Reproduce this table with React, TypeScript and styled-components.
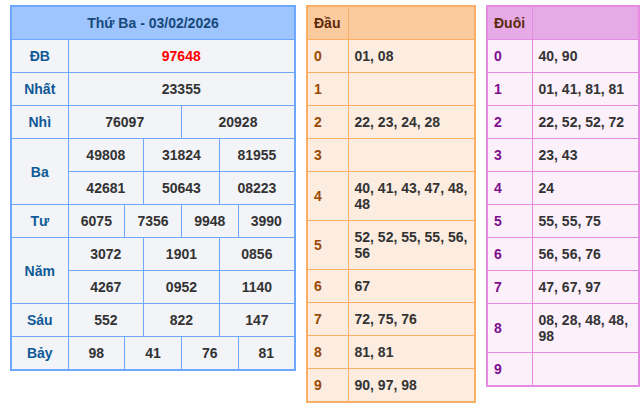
import React from 'react'
import styled, { createGlobalStyle } from 'styled-components'

const GlobalStyle = createGlobalStyle`
  body {
    margin: 0;
    background: #ffffff;
    font-family: "Liberation Sans", Arial, sans-serif;
  }
`

const Page = styled.div`
  display: flex;
  align-items: flex-start;
  gap: 10px;
  padding: 5px 0 5px 10px;
`

const Table = styled.table<{ $width: number; $border: string; $bg: string }>`
  flex-shrink: 0;
  width: ${(p) => p.$width}px;
  border-collapse: collapse;
  table-layout: fixed;
  border: 2px solid ${(p) => p.$border};
  background: ${(p) => p.$bg};
  font-size: 14px;
  font-weight: bold;
  line-height: 16px;
  color: #333333;

  td,
  th {
    border: 1px solid ${(p) => p.$border};
    padding: 8px 6px;
  }
`

const HeadCell = styled.th<{ $bg: string; $color: string; $align?: string }>`
  background: ${(p) => p.$bg};
  color: ${(p) => p.$color};
  text-align: ${(p) => p.$align || 'center'};
  font-weight: bold;
  height: 16px;
`

const PrizeLabel = styled.td`
  color: #0f5a96;
  text-align: center;
`

const PrizeValue = styled.td<{ $special?: boolean }>`
  text-align: center;
  color: ${(p) => (p.$special ? '#ff0000' : '#333333')};
`

const DigitCell = styled.td<{ $color: string }>`
  color: ${(p) => p.$color};
`

const ListCell = styled.td`
  word-wrap: break-word;
`

type Prize = { label: string; rows: string[][]; special?: boolean }

const prizes: Prize[] = [
  { label: 'ĐB', rows: [['97648']], special: true },
  { label: 'Nhất', rows: [['23355']] },
  { label: 'Nhì', rows: [['76097', '20928']] },
  { label: 'Ba', rows: [['49808', '31824', '81955'], ['42681', '50643', '08223']] },
  { label: 'Tư', rows: [['6075', '7356', '9948', '3990']] },
  { label: 'Năm', rows: [['3072', '1901', '0856'], ['4267', '0952', '1140']] },
  { label: 'Sáu', rows: [['552', '822', '147']] },
  { label: 'Bảy', rows: [['98', '41', '76', '81']] },
]

const dau = ['01, 08', '', '22, 23, 24, 28', '', '40, 41, 43, 47, 48, 48', '52, 52, 55, 55, 56, 56', '67', '72, 75, 76', '81, 81', '90, 97, 98']
const duoi = ['40, 90', '01, 41, 81, 81', '22, 52, 52, 72', '23, 43', '24', '55, 55, 75', '56, 56, 76', '47, 67, 97', '08, 28, 48, 48, 98', '']

const ResultTable: React.FC = () => (
  <Table $width={286} $border="#6ea8fe" $bg="#f3f4f8">
    <colgroup>
      <col style={{ width: 57 }} />
      {Array.from({ length: 12 }).map((_, i) => (
        <col key={i} />
      ))}
    </colgroup>
    <thead>
      <tr>
        <HeadCell colSpan={13} $bg="#9ec5fe" $color="#17497a">
          Thứ Ba - 03/02/2026
        </HeadCell>
      </tr>
    </thead>
    <tbody>
      {prizes.map((prize) =>
        prize.rows.map((row, ri) => (
          <tr key={prize.label + ri}>
            {ri === 0 && <PrizeLabel rowSpan={prize.rows.length}>{prize.label}</PrizeLabel>}
            {row.map((num, ci) => (
              <PrizeValue key={ci} colSpan={12 / row.length} $special={prize.special}>
                {num}
              </PrizeValue>
            ))}
          </tr>
        ))
      )}
    </tbody>
  </Table>
)

interface LotoTableProps {
  title: string
  items: string[]
  width: number
  labelWidth: number
  border: string
  bg: string
  headBg: string
  headColor: string
  digitColor: string
}

const LotoTable: React.FC<LotoTableProps> = ({ title, items, width, labelWidth, border, bg, headBg, headColor, digitColor }) => (
  <Table $width={width} $border={border} $bg={bg}>
    <colgroup>
      <col style={{ width: labelWidth }} />
      <col />
    </colgroup>
    <thead>
      <tr>
        <HeadCell $bg={headBg} $color={headColor} $align="left">
          {title}
        </HeadCell>
        <HeadCell $bg={headBg} $color={headColor} />
      </tr>
    </thead>
    <tbody>
      {items.map((list, i) => (
        <tr key={i}>
          <DigitCell $color={digitColor}>{i}</DigitCell>
          <ListCell>{list}</ListCell>
        </tr>
      ))}
    </tbody>
  </Table>
)

const App: React.FC = () => {
  return (
    <>
      <GlobalStyle />
      <Page>
        <ResultTable />
        <LotoTable
          title="Đầu"
          items={dau}
          width={170}
          labelWidth={41}
          border="#fbaf66"
          bg="#fdede1"
          headBg="#fbca9d"
          headColor="#5b2a0c"
          digitColor="#9a4a00"
        />
        <LotoTable
          title="Đuôi"
          items={duoi}
          width={154}
          labelWidth={45}
          border="#e68be1"
          bg="#fcf0fb"
          headBg="#e6aae6"
          headColor="#5b2a0c"
          digitColor="#7d0f8e"
        />
      </Page>
    </>
  )
}

export default App
